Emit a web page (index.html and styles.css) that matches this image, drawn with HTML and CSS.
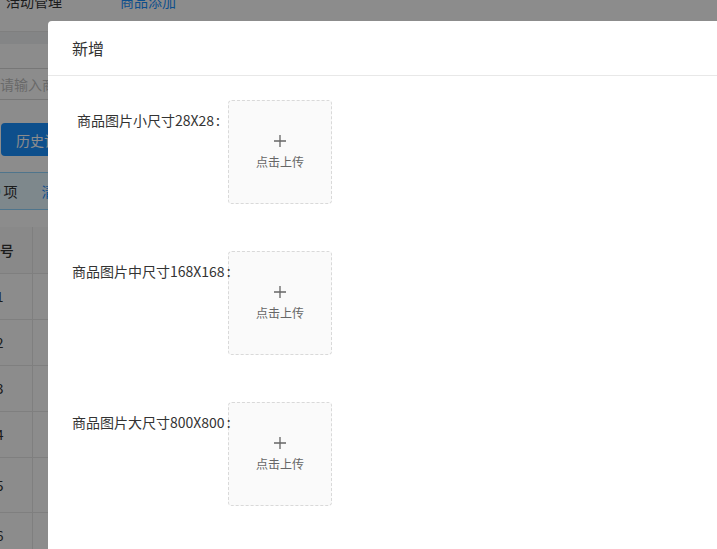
FILE: index.html
```html
<!DOCTYPE html>
<html>
<head>
    <meta charset="UTF-8">
    <title>商品添加</title>
    <link rel="stylesheet" href="styles.css">
</head>
<body>
    <div class="page">
        <div class="topnav">
            <span class="nav-item">活动管理</span>
            <span class="nav-item active">商品添加</span>
        </div>
        <div class="band"></div>

        <div class="content">
            <div class="search">
                <input type="text" class="search-input" placeholder="请输入商品名称">
            </div>
            <button class="btn-primary">历史记录</button>

            <div class="alert">
                <span>已选择 <b class="count">0</b> 项</span>
                <span class="clear-link">清空</span>
            </div>

            <table class="table">
                <thead>
                    <tr><th class="col-index">序号</th><th>商品名称</th><th>商品图片</th></tr>
                </thead>
                <tbody>
                    <tr><td class="col-index">1</td><td></td><td></td></tr>
                    <tr><td class="col-index">2</td><td></td><td></td></tr>
                    <tr><td class="col-index">3</td><td></td><td></td></tr>
                    <tr><td class="col-index">4</td><td></td><td></td></tr>
                    <tr class="tall"><td class="col-index">5</td><td></td><td></td></tr>
                    <tr><td class="col-index">6</td><td></td><td></td></tr>
                </tbody>
            </table>
        </div>
    </div>

    <div class="mask"></div>

    <div class="modal">
        <div class="modal-header">新增</div>
        <div class="modal-body">
            <div class="form-item">
                <label class="form-label">商品图片小尺寸28X28</label>
                <div class="upload">
                    <svg class="upload-icon" width="14" height="14" viewBox="0 0 14 14">
                        <path d="M7 1v12M1 7h12" stroke="#666" stroke-width="1.3" fill="none"/>
                    </svg>
                    <div class="upload-text">点击上传</div>
                </div>
            </div>
            <div class="form-item">
                <label class="form-label">商品图片中尺寸168X168</label>
                <div class="upload">
                    <svg class="upload-icon" width="14" height="14" viewBox="0 0 14 14">
                        <path d="M7 1v12M1 7h12" stroke="#666" stroke-width="1.3" fill="none"/>
                    </svg>
                    <div class="upload-text">点击上传</div>
                </div>
            </div>
            <div class="form-item">
                <label class="form-label">商品图片大尺寸800X800</label>
                <div class="upload">
                    <svg class="upload-icon" width="14" height="14" viewBox="0 0 14 14">
                        <path d="M7 1v12M1 7h12" stroke="#666" stroke-width="1.3" fill="none"/>
                    </svg>
                    <div class="upload-text">点击上传</div>
                </div>
            </div>
        </div>
    </div>
</body>
</html>
```

FILE: styles.css
```css
:root {
    --primary-color: #1890ff;
    --border-color: #e8e8e8;
    --text-color: #333;
}

* {
    box-sizing: border-box;
    margin: 0;
    padding: 0;
}

body {
    font-family: "Liberation Sans Narrow", "Noto Sans CJK SC", sans-serif;
    font-size: 14px;
    color: var(--text-color);
    background: #fff;
    overflow: hidden;
    height: 100vh;
}

/* page behind the dialog */
.page {
    margin-top: -15px;
}

.topnav {
    height: 47px;
    padding: 5px 0 0 6px;
    display: flex;
    align-items: flex-start;
    gap: 58px;
    border-bottom: 1px solid var(--border-color);
    background: #fff;
}

.nav-item {
    line-height: 22px;
}

.nav-item.active {
    color: var(--primary-color);
}

.band {
    height: 12px;
    background: #f0f2f5;
}

.content {
    padding-top: 24px;
    display: flex;
    flex-direction: column;
    align-items: flex-start;
}

.search-input {
    margin-left: -12px;
    width: 300px;
    height: 32px;
    padding: 4px 11px;
    border: 1px solid #d9d9d9;
    border-radius: 4px;
    font: inherit;
    outline: none;
}

.search-input::placeholder {
    color: #bfbfbf;
}

.btn-primary {
    margin: 23px 0 0 1px;
    height: 33px;
    padding: 0 15px;
    border: none;
    border-radius: 4px;
    background: var(--primary-color);
    color: #fff;
    font: inherit;
}

.alert {
    margin: 16px 0 0 -70px;
    width: 700px;
    height: 38px;
    padding-left: 16px;
    display: flex;
    align-items: center;
    background: #e6f7ff;
    border: 1px solid #91d5ff;
    border-radius: 4px;
}

.count {
    color: var(--primary-color);
    font-weight: 600;
}

.clear-link {
    margin-left: 24px;
    color: var(--primary-color);
}

.table {
    margin: 17px 0 0 -32px;
    width: 800px;
    border-collapse: collapse;
}

.table th,
.table td {
    height: 46px;
    border-bottom: 1px solid var(--border-color);
    border-right: 1px solid var(--border-color);
    text-align: left;
    padding: 0 16px;
}

.table th {
    background: #fafafa;
    font-weight: 500;
}

.table .col-index {
    width: 64px;
    padding: 0;
    text-align: center;
}

.table tr.tall td {
    height: 55px;
}

.mask {
    position: fixed;
    inset: 0;
    background: rgba(0, 0, 0, 0.45);
}

/* dialog */
.modal {
    position: fixed;
    left: 48px;
    top: 21px;
    width: 820px;
    height: 600px;
    background: #fff;
    border-radius: 4px;
}

.modal-header {
    height: 55px;
    padding: 0 24px;
    line-height: 54px;
    font-size: 16px;
    border-bottom: 1px solid var(--border-color);
}

.modal-body {
    padding: 24px;
    display: flex;
    flex-direction: column;
    gap: 47px;
}

.form-item {
    display: flex;
    align-items: flex-start;
}

/* long labels spill a little over the upload box, colon stays on top */
.form-label {
    position: relative;
    z-index: 1;
    flex: none;
    width: 156px;
    min-width: 0;
    line-height: 40px;
    text-align: right;
    white-space: nowrap;
    color: #333;
}

.form-label::after {
    content: ":";
    margin: 0 8px 0 2px;
}

.upload {
    flex: none;
    width: 104px;
    height: 104px;
    display: flex;
    flex-direction: column;
    align-items: center;
    justify-content: center;
    background: #fafafa;
    border: 1px dashed #d9d9d9;
    border-radius: 4px;
}

.upload-icon {
    display: block;
}

.upload-text {
    margin-top: 6px;
    line-height: 16px;
    font-size: 12px;
    color: #666;
}
```
